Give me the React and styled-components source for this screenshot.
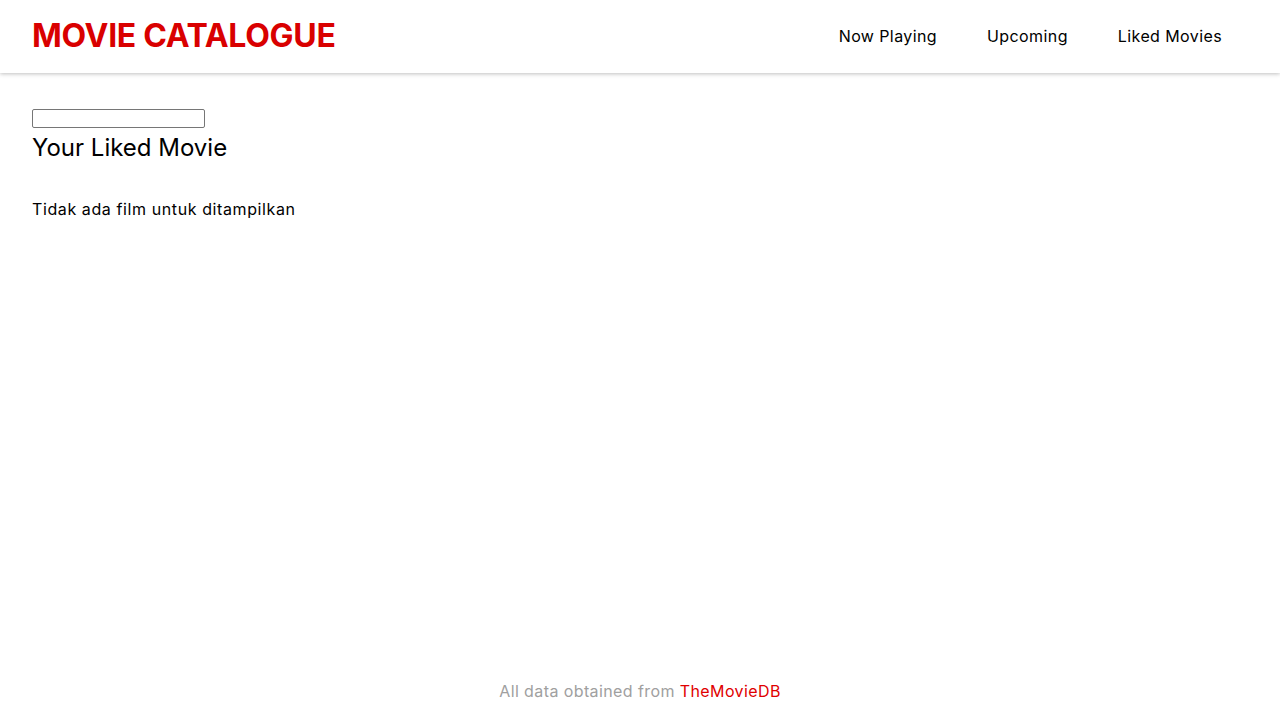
import React, { useState } from 'react';
import styled, { createGlobalStyle } from 'styled-components';

const GlobalStyle = createGlobalStyle`
  * {
    box-sizing: border-box;
  }

  body {
    margin: 0;
    font-family: 'Inter', 'Noto Sans', sans-serif;
    color: #000;
    background: #fff;
  }
`;

const StyledPage = styled.div`
  display: flex;
  flex-direction: column;
  min-height: 100vh;
`;

const StyledHeader = styled.header`
  display: flex;
  align-items: center;
  justify-content: space-between;
  height: 73px;
  padding: 0 58px 2px 32px;
  box-shadow: 0 1px 4px rgba(0, 0, 0, 0.25);
`;

const StyledLogo = styled.h1`
  margin: 0;
  font-size: 32px;
  font-weight: 700;
  color: #d90000;
  letter-spacing: -0.3px;
`;

const StyledNav = styled.nav`
  display: flex;
  gap: 50px;
`;

const StyledNavLink = styled.a`
  font-size: 16px;
  color: #000;
  text-decoration: none;
  letter-spacing: 0.4px;
  cursor: pointer;
`;

const StyledMain = styled.main`
  flex: 1;
  padding: 36px 32px;
`;

const StyledSearch = styled.input`
  display: block;
  width: 173px;
  height: 19px;
  margin: 0;
  padding: 1px 2px;
  border: 1px solid #767676;
  border-radius: 2px;
  font-size: 13px;
`;

const StyledTitle = styled.h2`
  margin: 2px 0 31px;
  font-size: 24px;
  font-weight: 400;
  line-height: 36px;
`;

const StyledEmpty = styled.p`
  margin: 0;
  font-size: 16px;
  line-height: 24px;
  letter-spacing: 0.6px;
`;

const StyledFooter = styled.footer`
  padding: 0 0 17px;
  text-align: center;
  font-size: 16px;
  line-height: 24px;
  letter-spacing: 0.4px;
  color: #a0a0a0;

  a {
    color: #e00000;
    text-decoration: none;
  }
`;

const App = () => {
  const [query, setQuery] = useState('');
  const links = ['Now Playing', 'Upcoming', 'Liked Movies'];

  return (
    <StyledPage>
      <GlobalStyle />
      <StyledHeader>
        <StyledLogo>MOVIE CATALOGUE</StyledLogo>
        <StyledNav>
          {links.map((link) => (
            <StyledNavLink key={link}>{link}</StyledNavLink>
          ))}
        </StyledNav>
      </StyledHeader>
      <StyledMain>
        <StyledSearch value={query} onChange={(e) => setQuery(e.target.value)} />
        <StyledTitle>Your Liked Movie</StyledTitle>
        <StyledEmpty>Tidak ada film untuk ditampilkan</StyledEmpty>
      </StyledMain>
      <StyledFooter>
        All data obtained from <a>TheMovieDB</a>
      </StyledFooter>
    </StyledPage>
  );
};

export default App;
